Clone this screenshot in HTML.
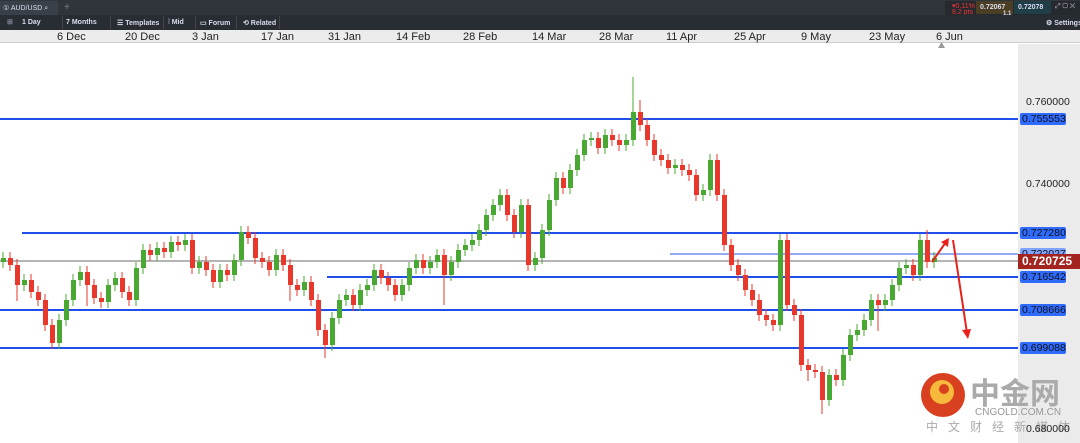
<!DOCTYPE html>
<html><head><meta charset="utf-8"><style>
*{margin:0;padding:0;box-sizing:border-box}
body{width:1080px;height:443px;overflow:hidden;background:#fff;font-family:"Liberation Sans",sans-serif;position:relative}
.bar1{position:absolute;left:0;top:0;width:1080px;height:15px;background:#30353c}
.bar2{position:absolute;left:0;top:15px;width:1080px;height:15px;background:#282c33}
.t{position:absolute;color:#dde;font-size:7px;font-weight:bold;white-space:nowrap}
.dates{position:absolute;left:0;top:30px;width:1080px;height:13px;background:#ececec;border-bottom:1px solid #ccc}
.d{position:absolute;top:1px;font-size:11px;color:#222}
.axis{position:absolute;left:1018px;top:44px;width:62px;height:399px;background:#ebebeb}
.lab{position:absolute;left:1020px;width:46px;height:12px;background:#2f6bff;border-radius:2px;font-size:10.5px;color:#111;padding-left:2px;line-height:12px}
.pl{position:absolute;left:1026px;font-size:10.5px;color:#222}
</style></head><body>
<div class="bar1"></div>
<div style="position:absolute;left:0;top:1px;width:58px;height:14px;background:#3a4049"></div>
<div class="t" style="left:3px;top:4px;font-weight:normal">① AUD/USD ⌕</div>
<div class="t" style="left:64px;top:2px;color:#667;font-size:10px">+</div>
<div style="position:absolute;left:945px;top:1px;width:135px;height:14px;background:#262a2f"></div>
<div class="t" style="left:952px;top:2px;color:#e33;font-weight:normal">▾0.11%</div>
<div class="t" style="left:952px;top:9px;color:#e33;font-weight:normal">8.2 pts</div>
<div style="position:absolute;left:976px;top:1px;width:37px;height:13px;background:#4a3f25"></div>
<div class="t" style="left:980px;top:4px">0.72067</div>
<div style="position:absolute;left:1014px;top:1px;width:37px;height:13px;background:#1f3e47"></div>
<div class="t" style="left:1018px;top:4px">0.72078</div>
<div class="t" style="left:1003px;top:11px;font-size:6px">1.1</div>
<div class="t" style="left:1055px;top:3px;color:#889">⤢ ▢ ✕</div>
<div class="bar2"></div>
<div class="t" style="left:7px;top:18px;color:#889">⊞</div>
<div class="t" style="left:22px;top:19px">1 Day</div>
<div class="t" style="left:66px;top:19px">7 Months</div>
<div class="t" style="left:117px;top:19px">☰ Templates</div>
<div class="t" style="left:168px;top:19px">⫶ Mid</div>
<div class="t" style="left:200px;top:19px">▭ Forum</div>
<div class="t" style="left:243px;top:19px">⟲ Related</div>
<div class="t" style="left:1046px;top:19px">⚙ Settings</div>
<div style="position:absolute;left:62px;top:16px;width:1px;height:13px;background:#444"></div>
<div style="position:absolute;left:110px;top:16px;width:1px;height:13px;background:#444"></div>
<div style="position:absolute;left:163px;top:16px;width:1px;height:13px;background:#444"></div>
<div style="position:absolute;left:195px;top:16px;width:1px;height:13px;background:#444"></div>
<div style="position:absolute;left:236px;top:16px;width:1px;height:13px;background:#444"></div>
<div style="position:absolute;left:279px;top:16px;width:1px;height:13px;background:#444"></div>
<div class="dates">
<span class="d" style="left:57px">6 Dec</span><span class="d" style="left:125px">20 Dec</span><span class="d" style="left:192px">3 Jan</span><span class="d" style="left:261px">17 Jan</span><span class="d" style="left:328px">31 Jan</span><span class="d" style="left:396px">14 Feb</span><span class="d" style="left:463px">28 Feb</span><span class="d" style="left:532px">14 Mar</span><span class="d" style="left:599px">28 Mar</span><span class="d" style="left:666px">11 Apr</span><span class="d" style="left:734px">25 Apr</span><span class="d" style="left:801px">9 May</span><span class="d" style="left:869px">23 May</span><span class="d" style="left:936px">6 Jun</span>
</div>
<div style="position:absolute;left:938px;top:42px;width:7px;height:6px;background:#999;clip-path:polygon(50% 0,100% 100%,0 100%)"></div>
<div class="axis"></div>
<svg width="1018" height="443" style="position:absolute;left:0;top:0">
<line x1="0" x2="1018" y1="119" y2="119" stroke="#1f4fe8" stroke-width="2"/>
<line x1="22" x2="1018" y1="233" y2="233" stroke="#1f4fe8" stroke-width="2"/>
<line x1="670" x2="1018" y1="254" y2="254" stroke="#6f8ff0" stroke-width="1.5"/>
<line x1="0" x2="1018" y1="261" y2="261" stroke="#888" stroke-width="1.2"/>
<line x1="327" x2="1018" y1="277" y2="277" stroke="#1f4fe8" stroke-width="2"/>
<line x1="0" x2="1018" y1="310" y2="310" stroke="#1f4fe8" stroke-width="2"/>
<line x1="0" x2="1018" y1="348" y2="348" stroke="#1f4fe8" stroke-width="2"/>
<path stroke="#49a832" stroke-width="1" fill="none" d="M3 252V268M24 274V291M59 314V349M66 294V326M73 274V306M80 266V286M108 279V308M115 272V291M136 262V306M143 244V274M157 242V261M171 236V258M185 234V251M199 256V274M220 264V288M234 254V281M241 226V266M276 249V276M304 276V296M332 312V351M339 294V324M346 289V306M360 284V311M367 279V296M374 264V291M402 279V301M409 262V291M416 254V274M430 256V274M437 249V268M451 256V281M458 244V268M465 239V256M472 234V251M479 224V246M486 209V236M493 199V221M500 189V211M521 199V238M535 252V271M542 224V264M549 194V236M556 172V206M570 164V194M577 149V176M584 134V161M591 132V146M605 129V154M626 134V151M633 77V146M675 159V174M703 184V201M710 154V196M780 234V331M829 369V406M843 349V386M850 329V361M857 324V341M864 314V336M871 294V326M885 294V311M892 279V306M899 262V291M906 259V274M920 234V281M934 252V268"/>
<path fill="#49a832" d="M1 258h5V262h-5zM22 280h5V285h-5zM57 320h5V343h-5zM64 300h5V320h-5zM71 280h5V300h-5zM78 272h5V280h-5zM106 285h5V302h-5zM113 278h5V285h-5zM134 268h5V300h-5zM141 250h5V268h-5zM155 248h5V255h-5zM169 242h5V252h-5zM183 240h5V245h-5zM197 262h5V268h-5zM218 270h5V282h-5zM232 260h5V275h-5zM239 232h5V260h-5zM274 255h5V270h-5zM302 282h5V290h-5zM330 318h5V345h-5zM337 300h5V318h-5zM344 295h5V300h-5zM358 290h5V305h-5zM365 285h5V290h-5zM372 270h5V285h-5zM400 285h5V295h-5zM407 268h5V285h-5zM414 260h5V268h-5zM428 262h5V268h-5zM435 255h5V262h-5zM449 262h5V275h-5zM456 250h5V262h-5zM463 245h5V250h-5zM470 240h5V245h-5zM477 230h5V240h-5zM484 215h5V230h-5zM491 205h5V215h-5zM498 195h5V205h-5zM519 205h5V232h-5zM533 258h5V265h-5zM540 230h5V258h-5zM547 200h5V230h-5zM554 178h5V200h-5zM568 170h5V188h-5zM575 155h5V170h-5zM582 140h5V155h-5zM589 138h5V140h-5zM603 135h5V148h-5zM624 140h5V145h-5zM631 112h5V140h-5zM673 165h5V168h-5zM701 190h5V195h-5zM708 160h5V190h-5zM778 240h5V325h-5zM827 375h5V400h-5zM841 355h5V380h-5zM848 335h5V355h-5zM855 330h5V335h-5zM862 320h5V330h-5zM869 300h5V320h-5zM883 300h5V305h-5zM890 285h5V300h-5zM897 268h5V285h-5zM904 265h5V268h-5zM918 240h5V275h-5zM932 258h5V262h-5z"/>
<path stroke="#e8372b" stroke-width="1" fill="none" d="M10 252V271M17 259V301M31 274V298M38 286V306M45 294V331M52 319V349M87 266V306M94 279V304M101 292V308M122 272V298M129 286V306M150 244V261M164 242V258M178 236V251M192 234V274M206 256V276M213 264V288M227 264V281M248 226V244M255 232V264M262 252V268M269 256V276M283 249V271M290 259V301M297 279V296M311 276V306M318 294V336M325 324V358M353 289V311M381 264V284M388 272V291M395 279V301M423 254V274M444 249V305M507 189V221M514 209V238M528 199V271M563 172V194M598 132V154M612 129V146M619 134V151M640 100V131M647 119V146M654 134V161M661 149V166M668 154V174M682 159V176M689 164V181M696 169V201M717 154V201M724 189V251M731 239V271M738 259V281M745 269V296M752 284V306M759 294V321M766 309V326M773 314V331M787 234V311M794 299V321M801 309V371M808 359V381M815 364V378M822 366V414M836 369V386M878 294V331M913 259V281M927 230V268"/>
<path fill="#e8372b" d="M8 258h5V265h-5zM15 265h5V285h-5zM29 280h5V292h-5zM36 292h5V300h-5zM43 300h5V325h-5zM50 325h5V343h-5zM85 272h5V285h-5zM92 285h5V298h-5zM99 298h5V302h-5zM120 278h5V292h-5zM127 292h5V300h-5zM148 250h5V255h-5zM162 248h5V252h-5zM176 242h5V245h-5zM190 240h5V268h-5zM204 262h5V270h-5zM211 270h5V282h-5zM225 270h5V275h-5zM246 232h5V238h-5zM253 238h5V258h-5zM260 258h5V262h-5zM267 262h5V270h-5zM281 255h5V265h-5zM288 265h5V285h-5zM295 285h5V290h-5zM309 282h5V300h-5zM316 300h5V330h-5zM323 330h5V345h-5zM351 295h5V305h-5zM379 270h5V278h-5zM386 278h5V285h-5zM393 285h5V295h-5zM421 260h5V268h-5zM442 255h5V275h-5zM505 195h5V215h-5zM512 215h5V232h-5zM526 205h5V265h-5zM561 178h5V188h-5zM596 138h5V148h-5zM610 135h5V140h-5zM617 140h5V145h-5zM638 112h5V125h-5zM645 125h5V140h-5zM652 140h5V155h-5zM659 155h5V160h-5zM666 160h5V168h-5zM680 165h5V170h-5zM687 170h5V175h-5zM694 175h5V195h-5zM715 160h5V195h-5zM722 195h5V245h-5zM729 245h5V265h-5zM736 265h5V275h-5zM743 275h5V290h-5zM750 290h5V300h-5zM757 300h5V315h-5zM764 315h5V320h-5zM771 320h5V325h-5zM785 240h5V305h-5zM792 305h5V315h-5zM799 315h5V365h-5zM806 365h5V370h-5zM813 370h5V372h-5zM820 372h5V400h-5zM834 375h5V380h-5zM876 300h5V305h-5zM911 265h5V275h-5zM925 240h5V262h-5z"/>
<path d="M932 262 L946 242" stroke="#e8221b" stroke-width="2"/><path d="M941 242 L949 238 L948 247Z" fill="#e8221b"/>
<path d="M953 240 L967 333" stroke="#e8221b" stroke-width="2"/><path d="M962 330 L968 339 L971 329Z" fill="#e8221b"/>
</svg>
<div class="pl" style="top:96px">0.760000</div>
<div class="pl" style="top:178px">0.740000</div>
<div class="lab" style="top:113px">0.755553</div>
<div class="lab" style="top:227px">0.727280</div>
<div class="lab" style="top:248px;background:#7fa3ff">0.722027</div>
<div style="position:absolute;left:1018px;top:254px;width:62px;height:15px;background:#a3231f;color:#fff;font-weight:bold;font-size:12px;line-height:15px;padding-left:4px">0.720725</div>
<div class="lab" style="top:271px">0.716542</div>
<div class="lab" style="top:304px">0.708666</div>
<div class="lab" style="top:342px">0.699088</div>
<svg width="160" height="73" style="position:absolute;left:920px;top:370px">
<circle cx="23" cy="25" r="22" fill="#d8401f"/>
<circle cx="22" cy="22" r="12" fill="#f6b93b"/>
<circle cx="24" cy="19" r="5" fill="#d8401f"/>
<text x="50" y="34" font-family="Noto Sans CJK SC,sans-serif" font-size="30" font-weight="bold" fill="#aaa">中金网</text>
<text x="55" y="45" font-family="Liberation Sans,sans-serif" font-size="10" fill="#999">CNGOLD.COM.CN</text>
<text x="6" y="61" font-family="Noto Sans CJK SC,sans-serif" font-size="12" fill="#aaa" letter-spacing="10">中文财经新媒体</text>
<text x="106" y="62" font-family="Liberation Sans,sans-serif" font-size="10.5" fill="#222">0.680000</text>
</svg>
</body></html>
